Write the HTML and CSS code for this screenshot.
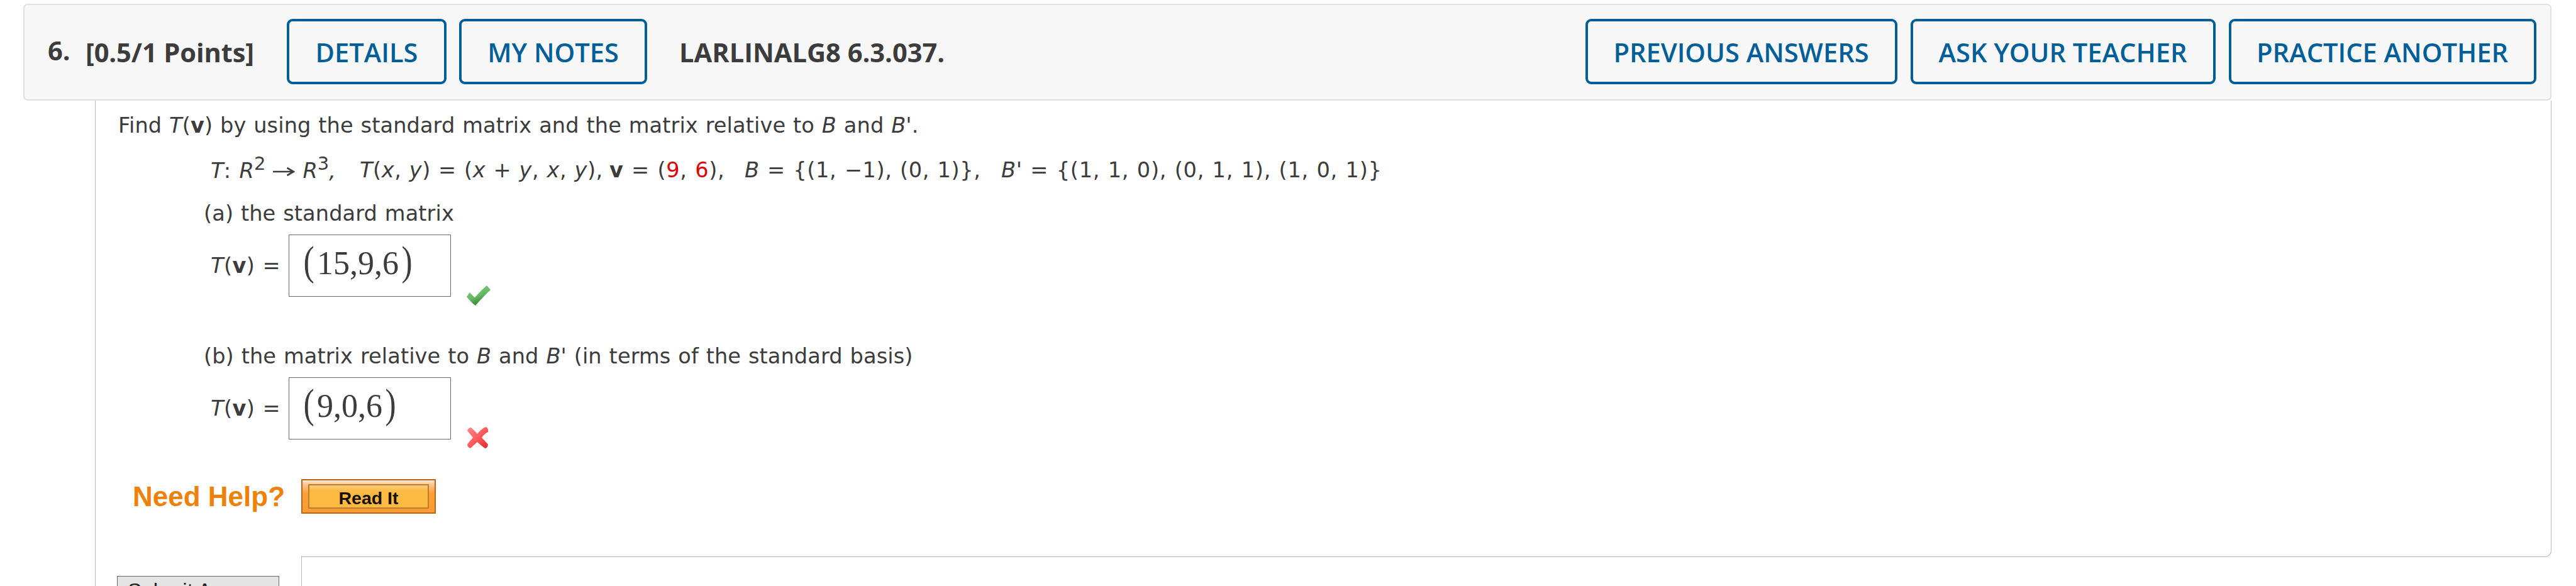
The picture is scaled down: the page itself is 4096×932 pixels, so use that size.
FILE: index.html
```html
<!DOCTYPE html>
<html lang="en">
<head>
<meta charset="utf-8">
<title>Question 6</title>
<link rel="stylesheet" href="styles.css">
</head>
<body>
<header class="question-bar">
  <div class="bar-left">
    <span class="number">6.</span>
    <span class="points">[0.5/1 Points]</span>
    <button class="btn btn-details">DETAILS</button>
    <button class="btn btn-notes">MY NOTES</button>
    <span class="code">LARLINALG8 6.3.037.</span>
  </div>
  <div class="bar-right">
    <button class="btn btn-previous">PREVIOUS ANSWERS</button>
    <button class="btn btn-ask">ASK YOUR TEACHER</button>
    <button class="btn btn-practice">PRACTICE ANOTHER</button>
  </div>
</header>
<main class="panel">
  <section class="content">
    <p class="line intro">Find <i>T</i>(<b>v</b>) by using the standard matrix and the matrix relative to <i>B</i> and <i>B'</i>.</p>
    <div class="line formula">
      <span class="map"><span class="map-name"><i>T</i>:</span><span class="space"><i>R</i><sup>2</sup></span><svg class="arrow" viewBox="0 0 35 24"><path d="M0 12H33M22.5 6L33 12L22.5 18"/></svg><span class="space"><i>R</i><sup>3</sup></span><i>,</i></span>
      <span class="rule"><i>T</i>(<i>x</i>, <i>y</i>) = (<i>x</i> + <i>y</i>, <i>x</i>, <i>y</i>),</span>
      <span class="vec"><b>v</b> = (<em>9</em>, <em>6</em>),</span>
      <span class="basis"><i>B</i> = {(1, −1), (0, 1)},</span>
      <span class="basis basis-prime"><i>B'</i> = {(1, 1, 0), (0, 1, 1), (1, 0, 1)}</span>
    </div>
    <p class="line part-a">(a) the standard matrix</p>
    <div class="answer">
      <span class="lhs"><i>T</i>(<b>v</b>) =</span>
      <div class="box"><span class="paren">(</span><span class="digits">15,9,6</span><span class="paren">)</span></div>
      <svg class="mark tick" viewBox="0 0 40 34"><defs><linearGradient id="green" x1="0" y1="0" x2="0.5" y2="1"><stop offset="0" stop-color="#7fcb78"/><stop offset=".6" stop-color="#68b965"/><stop offset="1" stop-color="#2f7d32"/></linearGradient></defs><path fill="url(#green)" d="M1 19L6 12Q8 15 14 20Q22 11 33 1L39 8Q28 18 15 33Q8 28 1 19Z"/></svg>
    </div>
    <p class="line part-b">(b) the matrix relative to <i>B</i> and <i>B'</i> (in terms of the standard basis)</p>
    <div class="answer">
      <span class="lhs"><i>T</i>(<b>v</b>) =</span>
      <div class="box"><span class="paren">(</span><span class="digits">9,0,6</span><span class="paren">)</span></div>
      <svg class="mark cross" viewBox="0 0 36 36"><defs><linearGradient id="red" x1="0" y1="0" x2="1" y2="1"><stop offset="0" stop-color="#ff8a8a"/><stop offset=".5" stop-color="#ff5c5c"/><stop offset="1" stop-color="#e02626"/></linearGradient></defs><path fill="url(#red)" d="M2 7Q4 2 8 2Q13 6 18 12Q25 3 32 1Q36 4 35 9Q29 12 25 18Q30 23 35 29Q34 35 30 35Q23 30 18 25Q12 30 7 35Q2 33 2 29Q6 23 11 18Q7 13 2 7Z"/></svg>
    </div>
    <div class="help"><span class="need">Need Help?</span><button class="read"><span class="read-face">Read It</span></button></div>
  </section>
  <footer class="submit-row"><div class="submit-cell"><button class="submit">Submit Answer</button></div></footer>
</main>
</body>
</html>
```
FILE: styles.css
```css
* { box-sizing: border-box; }
html, body { margin: 0; height: 932px; overflow: hidden; background: #fff; }
body { padding: 6px 39px 0 37px; font-family: "DejaVu Sans", sans-serif; font-size: 33.6px; color: #3c3c3c; }
p { margin: 0; }
button { margin: 0; padding: 0; font: inherit; color: inherit; }

.question-bar { display: flex; justify-content: space-between; height: 154px; padding: 22px 22.5px 0 37px; border: 2px solid #e0e0e0; border-radius: 7px; background: #f7f7f7; font-family: "Open Sans", sans-serif; font-size: 41.6px; font-weight: 700; }
.bar-left, .bar-right { display: flex; align-items: flex-start; line-height: 106px; white-space: nowrap; }
.number { width: 60px; line-height: 100px; }
.points { width: 320px; letter-spacing: -.1px; }
.bar-right { gap: 21px; }
.btn { flex: none; height: 104px; padding-top: 2px; border: 4px solid #005f98; border-radius: 9px; background: transparent; color: #005f98; font-weight: 600; line-height: 94px; }
.btn-details { width: 254px; margin-right: 20px; }
.btn-notes { width: 299px; margin-right: 51px; }
.btn-previous { width: 496px; }
.btn-ask { width: 485px; }
.btn-practice { width: 489px; }

.panel { margin-left: 114px; border-left: 1px solid #b8b8b8; height: 772px; }
.content { height: 726px; padding: 15px 0 0 36px; border: solid #b8b8b8; border-width: 0 1px 1px 0; border-bottom-right-radius: 10px; }
.line { height: 50px; line-height: 50px; letter-spacing: .1px; word-spacing: 1.1px; white-space: nowrap; }
.formula { display: grid; grid-template-columns: 237px 397px 215px 408px auto; margin: 21px 0 0 147px; }
.map { display: flex; padding-top: 1px; }
.map-name { width: 45.6px; }
.map .space { letter-spacing: 0; }
.arrow { width: 35px; height: 24px; margin: 14px 12.5px 0 11.5px; fill: none; stroke: #3c3c3c; stroke-width: 2.6; }
.rule { letter-spacing: .55px; }
.vec { letter-spacing: .7px; }
.basis { letter-spacing: .64px; }
.basis-prime { letter-spacing: .75px; }
em { font-style: normal; color: #e00000; }
sup { font-size: 29px; line-height: 0; vertical-align: 13px; }
.part-a { margin: 19px 0 0 136px; }
.answer { display: flex; margin: 8px 0 0 147px; height: 114px; }
.lhs { width: 124px; padding-top: 25px; line-height: 50px; letter-spacing: .4px; word-spacing: 1.1px; white-space: nowrap; }
.box { display: flex; width: 258px; height: 99px; padding-left: 20px; border: 1px solid #6a6a6a; font-family: "Liberation Serif", serif; font-size: 52px; line-height: 90px; }
.paren { width: 22px; font-size: 66px; line-height: 82px; transform: scaleX(.78); }
.digits { margin: 0 2px; }
.mark { margin: 80px 0 0 24px; }
.tick { width: 40px; height: 34px; }
.cross { width: 36px; height: 36px; margin-top: 78px; }
.part-b { margin: 55px 0 0 136px; }
.help { display: flex; margin: 48px 0 0 23px; height: 55px; }
.need { width: 268px; font: 700 44px/55px "Liberation Sans", sans-serif; color: #ee8208; }
.read { width: 214px; height: 55px; padding: 6px 9px; border: 2px solid #b8651a; background: linear-gradient(#ffe8d4, #ffc48c 14%, #ff9f38 40%, #f99a34); }
.read-face { display: block; height: 39px; border: 2px solid #bd7e2c; background: linear-gradient(#ffce80, #fdba43 25%); color: #171000; font: 700 28.5px/40px "Liberation Sans", sans-serif; }
.submit-row { display: flex; margin-top: -2px; height: 48px; }
.submit-cell { width: 328px; padding: 32px 0 0 34px; border-right: 1px solid #b8b8b8; background: #fff; }
.submit { width: 258px; height: 46px; padding: 2px 0 0 16px; border: 1px solid #666; background: #e4e4e4; color: #222; font: 33.4px/42px "Liberation Sans", sans-serif; text-align: left; }
```
